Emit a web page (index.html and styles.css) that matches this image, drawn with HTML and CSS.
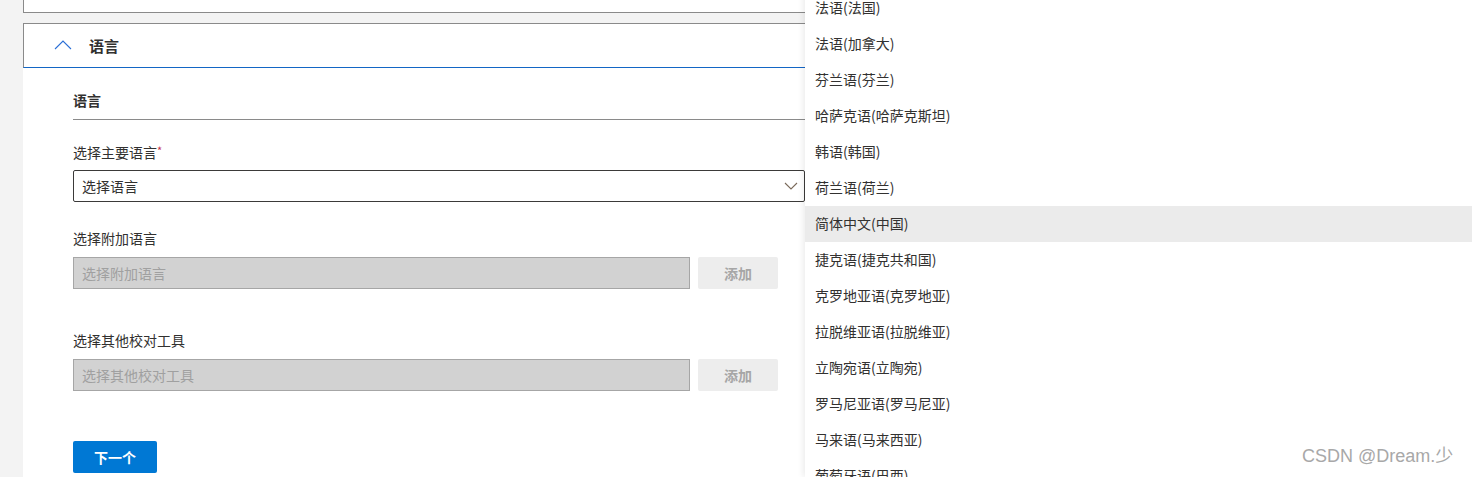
FILE: index.html
```html
<!DOCTYPE html>
<html lang="zh-CN">
<head>
<meta charset="utf-8">
<link rel="stylesheet" href="styles.css">
</head>
<body>
<div class="page">
  <div class="card-top"></div>
  <div class="section">
    <div class="section-head">
      <svg class="chev-up" width="18" height="10" viewBox="0 0 18 10"><path d="M1 9 L9 1 L17 9" fill="none" stroke="#2b6fd6" stroke-width="1.1"/></svg>
      <span class="section-title">语言</span>
    </div>
    <div class="section-body">
      <div class="subhead">语言</div>
      <div class="label first">选择主要语言<span class="req">*</span></div>
      <div class="select">
        <span>选择语言</span>
        <svg class="chev-down" width="14" height="8" viewBox="0 0 14 8"><path d="M1 1 L7 7 L13 1" fill="none" stroke="#7a6a5a" stroke-width="1.1"/></svg>
      </div>
      <div class="label">选择附加语言</div>
      <div class="row">
        <div class="input-disabled">选择附加语言</div>
        <div class="btn-disabled">添加</div>
      </div>
      <div class="label far">选择其他校对工具</div>
      <div class="row">
        <div class="input-disabled">选择其他校对工具</div>
        <div class="btn-disabled">添加</div>
      </div>
      <div class="btn-primary">下一个</div>
    </div>
  </div>
</div>
<ul class="menu">
  <li>法语(法国)</li>
  <li>法语(加拿大)</li>
  <li>芬兰语(芬兰)</li>
  <li>哈萨克语(哈萨克斯坦)</li>
  <li>韩语(韩国)</li>
  <li>荷兰语(荷兰)</li>
  <li class="active">简体中文(中国)</li>
  <li>捷克语(捷克共和国)</li>
  <li>克罗地亚语(克罗地亚)</li>
  <li>拉脱维亚语(拉脱维亚)</li>
  <li>立陶宛语(立陶宛)</li>
  <li>罗马尼亚语(罗马尼亚)</li>
  <li>马来语(马来西亚)</li>
  <li>葡萄牙语(巴西)</li>
</ul>
<div class="watermark">CSDN @Dream.少</div>
</body>
</html>
```

FILE: styles.css
```css
html, body {
  margin: 0;
  padding: 0;
  height: 477px;
  overflow: hidden;
  background: #f3f3f3;
  font-family: "Noto Sans CJK SC", "Noto Sans", sans-serif;
  color: #323130;
}
.page {
  padding-left: 23px;
  height: 477px;
  box-sizing: border-box;
  display: flex;
  flex-direction: column;
}
.card-top {
  height: 12px;
  background: #fff;
  border: 1px solid #8a8a8a;
  border-top: none;
  margin-bottom: 10px;
}
.section {
  flex: 1;
  display: flex;
  flex-direction: column;
}
.section-head {
  height: 43px;
  background: #fff;
  border: 1px solid #8a8a8a;
  border-bottom: 1px solid #1366c5;
  display: flex;
  align-items: center;
}
.chev-up {
  margin-left: 30px;
  margin-top: -2px;
}
.section-title {
  margin-left: 17px;
  font-size: 15px;
  font-weight: 600;
  color: #323130;
}
.section-body {
  flex: 1;
  background: #fff;
  padding: 22px 0 0 50px;
  width: 732px;
}
.subhead {
  font-size: 14px;
  font-weight: 600;
  line-height: 20px;
  padding-bottom: 9px;
  border-bottom: 1px solid #8a8a8a;
}
.label {
  font-size: 14px;
  line-height: 20px;
  margin-top: 26px;
  margin-bottom: 9px;
}
.label.first {
  margin-top: 22px;
  margin-bottom: 8px;
}
.label.far {
  margin-top: 41px;
}
.req {
  color: #c4314b;
  font-size: 11px;
  vertical-align: top;
  line-height: 16px;
}
.select {
  height: 30px;
  border: 1px solid #3b3a39;
  border-radius: 2px;
  display: flex;
  align-items: center;
  justify-content: space-between;
  padding: 0 6px 0 8px;
  font-size: 14px;
}
.row {
  display: flex;
  gap: 8px;
}
.input-disabled {
  width: 607px;
  height: 30px;
  line-height: 30px;
  background: #d2d2d2;
  border: 1px solid #a6a6a6;
  padding-left: 8px;
  font-size: 14px;
  color: #a0a0a0;
}
.btn-disabled {
  width: 80px;
  height: 32px;
  line-height: 32px;
  text-align: center;
  background: #ededed;
  border-radius: 2px;
  color: #a6a6a6;
  font-size: 14px;
  font-weight: 700;
}
.btn-primary {
  margin-top: 50px;
  width: 84px;
  height: 32px;
  line-height: 32px;
  text-align: center;
  background: #0078d4;
  border-radius: 2px;
  color: #fff;
  font-size: 14px;
  font-weight: 700;
}
.menu {
  position: absolute;
  left: 805px;
  top: -10px;
  right: 0;
  height: 487px;
  margin: 0;
  padding: 0;
  list-style: none;
  background: #fff;
  box-shadow: -2px 0 6px rgba(0,0,0,0.08);
  overflow: hidden;
}
.menu li {
  height: 36px;
  line-height: 34px;
  padding-left: 10px;
  font-size: 14px;
  color: #323130;
  box-sizing: border-box;
}
.menu li.active {
  background: #ebebeb;
}
.watermark {
  position: absolute;
  left: 1302px;
  top: 444px;
  font-family: "Liberation Sans", "Noto Sans CJK SC", sans-serif;
  font-size: 18px;
  line-height: 24px;
  color: #a8a8a8;
  text-shadow: 0 0 1px #fff;
}
```
